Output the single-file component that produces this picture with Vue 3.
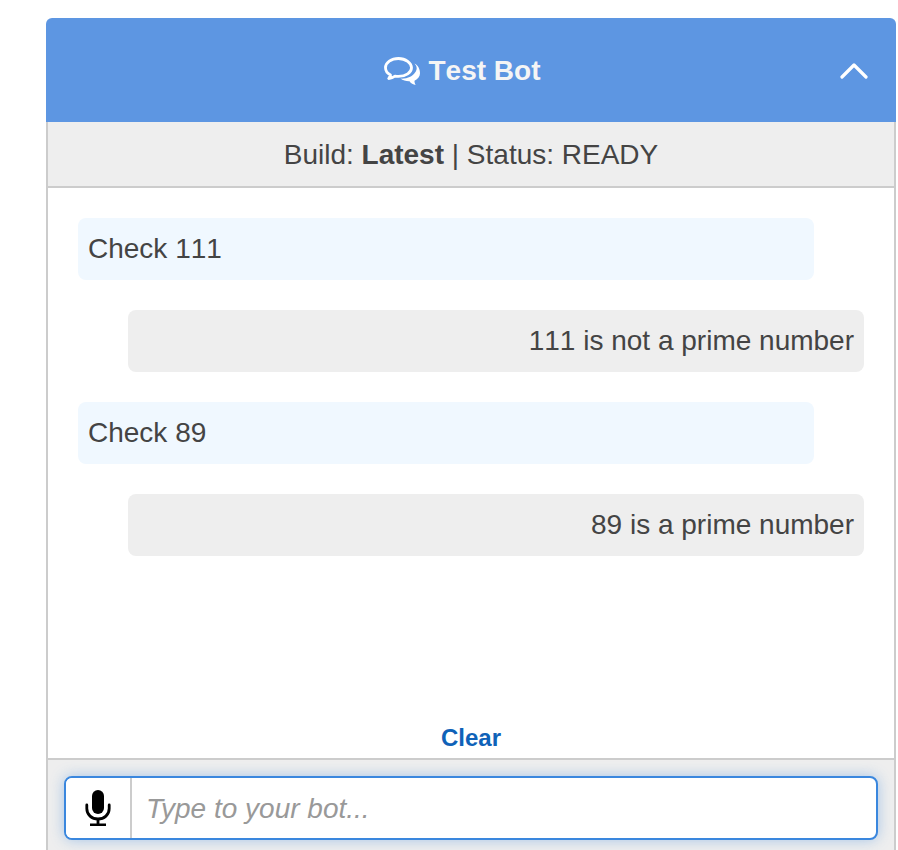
<script setup>
const messages = [
  { id: 1, from: 'user', text: 'Check 111' },
  { id: 2, from: 'bot', text: '111 is not a prime number' },
  { id: 3, from: 'user', text: 'Check 89' },
  { id: 4, from: 'bot', text: '89 is a prime number' }
];
</script>

<template>
  <div class="page">
    <div class="panel">
      <div class="panel-heading">
        <div class="title">
          <svg class="chat-icon" viewBox="0 0 37 29" width="37" height="29">
            <path d="M14.5 1.500C7.300 1.500 1.500 5.600 1.500 10.800c0 3 1.900 5.600 5 7.300-.3 1.300-1 2.400-1.800 3.400 2.400-.3 4.600-1.200 6.300-2.400 1.100.2 2.300.3 3.500.3 7.200 0 13-4 13-8.600S21.700 1.500 14.500 1.500z" fill="none" stroke="#fff" stroke-width="2.800" stroke-linejoin="round"/>
            <path d="M30.500 6.500c1.400 1.500 2.200 3.100 2.200 4.800 0 2.900-2.700 6.500-6.500 8.500-3 1.400-6.300 2-9.700 1.800 2.400 1.900 5.700 2.700 9 2.600 1.300 2 3.700 3.400 6.300 3.800-.9-1.100-1.400-2.600-1.300-4.300 3.500-1.500 5.500-4.200 5.500-7.400 0-4-1.800-8-5.500-9.800z" fill="#fff"/>
          </svg>
          <span>Test Bot</span>
        </div>
        <svg class="chevron" viewBox="0 0 28 17" width="28" height="17">
          <path d="M2 15 14 3l12 12" fill="none" stroke="#fff" stroke-width="3.200" stroke-linecap="round" stroke-linejoin="round"/>
        </svg>
      </div>

      <div class="status-bar">Build: <b>Latest</b> | Status: READY</div>

      <div class="panel-body">
        <div class="conversation">
          <div
            v-for="message in messages"
            :key="message.id"
            class="message"
            :class="message.from === 'user' ? 'message-user' : 'message-bot'"
          >
            {{ message.text }}
          </div>
        </div>
        <a class="clear-link">Clear</a>
      </div>

      <div class="panel-footer">
        <div class="input-group">
          <button class="mic-button">
            <svg viewBox="0 0 26 36" width="26" height="36">
              <rect x="7" y="0" width="12" height="24" rx="6" fill="#000"/>
              <path d="M1.800 15v3.500C1.800 24.800 6.800 29 13 29s11.200-4.200 11.200-10.500V15" fill="none" stroke="#000" stroke-width="2.800" stroke-linecap="round"/>
              <path d="M13 29v5" stroke="#000" stroke-width="2.800"/>
              <path d="M5 34.700h16" stroke="#000" stroke-width="2.600"/>
            </svg>
          </button>
          <input class="chat-input" type="text" placeholder="Type to your bot..." />
        </div>
      </div>
    </div>
  </div>
</template>

<style scoped>
.page {
  height: 850px;
  overflow: hidden;
  padding: 18px 2px 0 46px;
  box-sizing: border-box;
  font-family: "Liberation Sans", Arial, sans-serif;
  font-size: 28px;
  font-kerning: none;
  color: #444;
}

.panel {
  width: 850px;
  height: 860px;
  display: flex;
  flex-direction: column;
  border-radius: 6px 6px 0 0;
  box-sizing: border-box;
}

.panel-heading {
  height: 104px;
  flex: none;
  box-sizing: border-box;
  background: #5d96e2;
  border-radius: 6px 6px 0 0;
  display: flex;
  align-items: center;
  justify-content: center;
  position: relative;
  color: #f5f5f5;
  padding: 1px 18px 0 0;
}

.title {
  display: flex;
  align-items: center;
  gap: 8px;
  font-weight: 700;
  font-size: 28px;
}

.chat-icon {
  margin-top: 2px;
}

.chevron {
  position: absolute;
  right: 28px;
  top: 44px;
}

.status-bar {
  height: 66px;
  flex: none;
  box-sizing: border-box;
  background: #eee;
  border-left: 2px solid #ccc;
  border-right: 2px solid #ccc;
  border-bottom: 2px solid #ccc;
  display: flex;
  align-items: center;
  justify-content: center;
  white-space: pre-wrap;
  padding-top: 2px;
}

.panel-body {
  height: 570px;
  flex: none;
  box-sizing: border-box;
  background: #fff;
  border-left: 2px solid #ccc;
  border-right: 2px solid #ccc;
  display: flex;
  flex-direction: column;
  justify-content: space-between;
  padding: 30px 30px 5px;
}

.conversation {
  display: flex;
  flex-direction: column;
  gap: 30px;
}

.message {
  height: 62px;
  width: 736px;
  box-sizing: border-box;
  border-radius: 8px;
  padding: 0 10px;
  display: flex;
  align-items: center;
}

.message-user {
  background: #f0f8ff;
}

.message-bot {
  background: #eee;
  justify-content: flex-end;
  align-self: flex-end;
}

.clear-link {
  align-self: center;
  font-size: 24px;
  font-weight: 700;
  line-height: 30px;
  color: #0f62b8;
}

.panel-footer {
  flex: 1;
  background: #eee;
  border: 2px solid #ccc;
  border-bottom: none;
  padding: 16px 16px 0 16px;
  box-sizing: border-box;
}

.input-group {
  height: 64px;
  width: 814px;
  box-sizing: border-box;
  display: flex;
  background: #fff;
  border: 2px solid #3a87de;
  border-radius: 8px;
  box-shadow: 0 0 14px rgba(58, 135, 222, 0.4);
  overflow: hidden;
}

.mic-button {
  width: 66px;
  flex: none;
  border: none;
  border-right: 2px solid #ccc;
  background: #fff;
  padding: 0;
  display: flex;
  align-items: center;
  justify-content: center;
}

.chat-input {
  flex: 1;
  min-width: 0;
  border: none;
  outline: none;
  padding: 2px 14px 0;
  font-family: inherit;
  font-size: 28px;
  color: #444;
  background: transparent;
}

.chat-input::placeholder {
  color: #999;
  font-style: italic;
  opacity: 1;
}
</style>
